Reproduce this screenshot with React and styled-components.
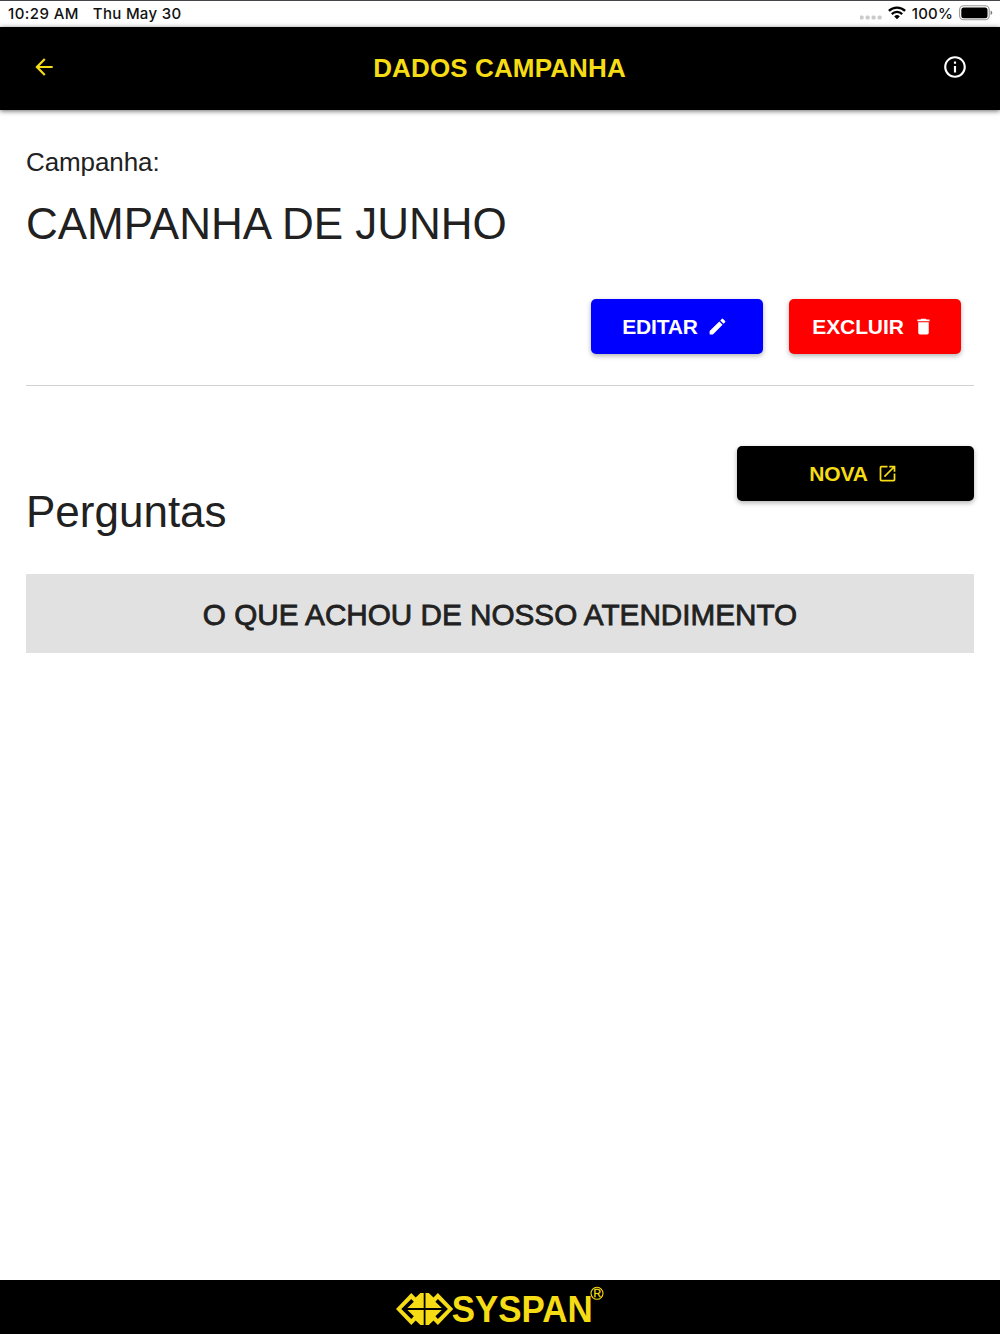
import React from "react";
import styled, { createGlobalStyle } from "styled-components";
import { MdArrowBack, MdCreate, MdDelete, MdInfoOutline, MdOpenInNew } from "react-icons/md";

const colors = {
  yellow: "#f5dc14",
  black: "#000000",
  blue: "#0000ff",
  red: "#ff0000",
  text: "#212121",
  line: "#d0d0d0",
  row: "#e1e1e1",
};

const GlobalStyle = createGlobalStyle`
  * {
    box-sizing: border-box;
  }
  body {
    margin: 0;
    background: #ffffff;
  }
`;

const Screen = styled.div`
  font-family: "Liberation Sans", Arial, sans-serif;
  color: ${colors.text};
  background: #fff;
  height: 1334px;
  display: flex;
  flex-direction: column;
  overflow: hidden;
`;

const StatusBar = styled.div`
  height: 27px;
  flex: none;
  border-top: 1px solid #48464a;
  padding: 0 7px 2px 8px;
  display: flex;
  align-items: center;
  justify-content: space-between;
  font-family: Inter, sans-serif;
  font-size: 15px;
  font-weight: 500;
  color: #111;
`;

const StatusGroup = styled.div`
  display: flex;
  align-items: center;
  gap: ${(p) => p.$gap}px;
`;

const StatusText = styled.span`
  letter-spacing: ${(p) => p.$spacing || 0}px;
  white-space: nowrap;
`;

const Header = styled.header`
  background: ${colors.black};
  height: 83px;
  flex: none;
  padding: 0 32px 0 31px;
  display: grid;
  grid-template-columns: 26px 1fr 26px;
  align-items: center;
  box-shadow: 0 1px 5px rgba(0, 0, 0, 0.6);
`;

const IconButton = styled.button`
  background: none;
  border: none;
  padding: 0 0 4px;
  display: flex;
  color: ${(p) => p.$color};
  font-size: 26px;
`;

const Title = styled.h1`
  margin: 0;
  text-align: center;
  font-size: 26px;
  font-weight: 700;
  letter-spacing: 0.13px;
  color: ${colors.yellow};
`;

const Content = styled.main`
  flex: 1;
  padding: 36px 26px 0 27px;
  display: flex;
  flex-direction: column;
`;

const Label = styled.div`
  font-size: 26px;
  line-height: 32px;
  letter-spacing: -0.1px;
  margin-left: -1px;
`;

const Heading = styled.h2`
  margin: ${(p) => p.$top}px 0 0 -1px;
  font-size: 44px;
  line-height: 52px;
  font-weight: 400;
`;

const Actions = styled.div`
  display: flex;
  justify-content: flex-end;
  gap: 26px;
  margin-top: 49px;
  padding-right: 13px;
`;

const Button = styled.button`
  width: ${(p) => p.$width}px;
  height: 55px;
  flex: none;
  border: none;
  border-radius: 5px;
  padding: 0 4px 0 0;
  background: ${(p) => p.$bg};
  color: ${(p) => p.$color || "#fff"};
  box-shadow: 0 2px 5px rgba(0, 0, 0, 0.3);
  display: flex;
  align-items: center;
  justify-content: center;
  gap: 9px;
  font-family: inherit;
  font-size: 21px;
  font-weight: 700;
  letter-spacing: ${(p) => p.$spacing || 0}px;
  span {
    padding-top: 1px;
  }
  svg {
    font-size: 21px;
  }
`;

const Divider = styled.hr`
  width: 948px;
  margin: 31px 0 0 -1px;
  border: none;
  border-top: 1px solid ${colors.line};
`;

const QuestionsHeader = styled.div`
  margin-top: 60px;
  height: 128px;
  display: flex;
  justify-content: space-between;
  align-items: flex-start;
`;

const Question = styled.div`
  width: 948px;
  height: 79px;
  margin-left: -1px;
  background: ${colors.row};
  display: flex;
  align-items: center;
  justify-content: center;
  padding-top: 3px;
  font-size: 29.7px;
  -webkit-text-stroke: 0.8px ${colors.text};
`;

const Footer = styled.footer`
  height: 54px;
  flex: none;
  background: ${colors.black};
  display: flex;
  justify-content: center;
  padding-top: 5px;
`;

const Dots = styled.svg`
  margin-top: 9px;
`;

function SignalDots() {
  return (
    <Dots width="22" height="5" viewBox="0 0 22 5" fill="#cbcbcb">
      {[0, 6, 12, 18].map((x) => (
        <rect key={x} x={x - 0.5} y="0.5" width="4.2" height="4" rx="1.5" />
      ))}
    </Dots>
  );
}

function Wifi() {
  return (
    <svg width="18" height="14" viewBox="0 0 18 14" fill="none" stroke="#000" strokeWidth="2.3">
      <path d="M0.9 4.9a11.5 11.5 0 0 1 16.2 0" />
      <path d="M3.8 8.1a7.3 7.3 0 0 1 10.4 0" />
      <path d="M6.2 10.4a4 4 0 0 1 5.6 0L9 13.2z" fill="#000" stroke="none" />
    </svg>
  );
}

function Battery() {
  return (
    <svg width="34" height="16" viewBox="0 0 34 16">
      <rect x="0.6" y="0.8" width="29.6" height="14" rx="4" fill="none" stroke="#999" strokeWidth="1.1" />
      <rect x="2.3" y="2.4" width="26.2" height="10.8" rx="2.5" fill="#000" />
      <path d="M31.6 5.6c2.2 0.8 2.2 3.7 0 4.5z" fill="#777" />
    </svg>
  );
}

// one quarter of the mark, mirrored around (29.6, 24)
const MARK = "M-28.6 0L-13.3 -16L-8.9 -11.4L-4.2 -16H-0.9V-0.9H-17.2L-10.8 -7.3L-13.3 -10L-23.3 0Z";

function Logo() {
  return (
    <svg width="210" height="44" viewBox="0 0 210 44" fill={colors.yellow}>
      <g transform="translate(29.6 24)">
        <path d={MARK} />
        <path d={MARK} transform="scale(1 -1)" />
        <path d={MARK} transform="scale(-1 1)" />
        <path d={MARK} transform="scale(-1 -1)" />
      </g>
      <text x="56.7" y="36.7" fontSize="36" fontWeight="700" textLength="141" lengthAdjust="spacingAndGlyphs">
        SYSPAN
      </text>
      <circle cx="202" cy="8.3" r="6" fill="none" stroke={colors.yellow} strokeWidth="1.1" />
      <text x="202.2" y="12.1" fontSize="10.5" textAnchor="middle" stroke={colors.yellow} strokeWidth="0.3">
        R
      </text>
    </svg>
  );
}

export default function App() {
  return (
    <Screen>
      <GlobalStyle />
      <StatusBar>
        <StatusGroup $gap={14}>
          <StatusText $spacing={0.42}>10:29 AM</StatusText>
          <StatusText $spacing={0.3}>Thu May 30</StatusText>
        </StatusGroup>
        <StatusGroup $gap={6}>
          <SignalDots />
          <Wifi />
          <StatusText $spacing={0.2}>100%</StatusText>
          <Battery />
        </StatusGroup>
      </StatusBar>

      <Header>
        <IconButton aria-label="Voltar" $color={colors.yellow}>
          <MdArrowBack />
        </IconButton>
        <Title>DADOS CAMPANHA</Title>
        <IconButton aria-label="Informações" $color="#fff">
          <MdInfoOutline />
        </IconButton>
      </Header>

      <Content>
        <Label>Campanha:</Label>
        <Heading $top={20}>CAMPANHA DE JUNHO</Heading>
        <Actions>
          <Button $bg={colors.blue} $width={172} $spacing={-0.2}>
            <span>EDITAR</span>
            <MdCreate />
          </Button>
          <Button $bg={colors.red} $width={172} $spacing={-0.1}>
            <span>EXCLUIR</span>
            <MdDelete />
          </Button>
        </Actions>
        <Divider />
        <QuestionsHeader>
          <Heading $top={40}>Perguntas</Heading>
          <Button $bg={colors.black} $color={colors.yellow} $width={237} $spacing={-0.2}>
            <span>NOVA</span>
            <MdOpenInNew />
          </Button>
        </QuestionsHeader>
        <Question>O QUE ACHOU DE NOSSO ATENDIMENTO</Question>
      </Content>

      <Footer>
        <Logo />
      </Footer>
    </Screen>
  );
}
